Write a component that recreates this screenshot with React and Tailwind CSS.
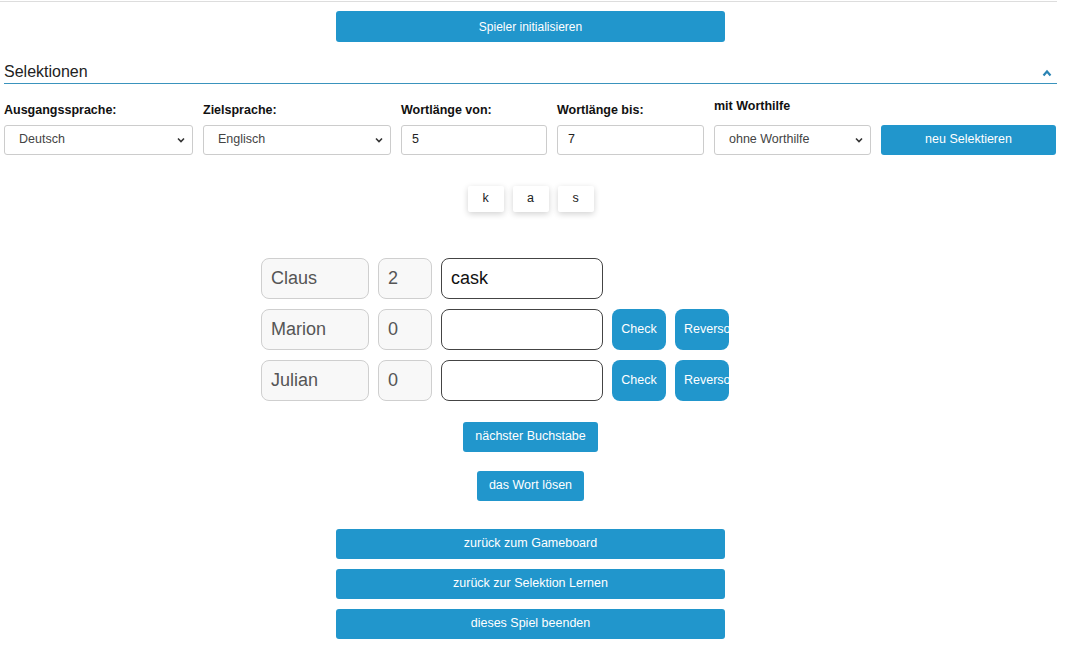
import React from "react";

const blue = "bg-[#2196cc]";

function Chevron() {
    return (
        <svg width="10" height="10" viewBox="0 0 10 10" className="absolute right-[7px] top-[10px] pointer-events-none">
            <path d="M2 3.5 L5 6.5 L8 3.5" fill="none" stroke="#333" strokeWidth="1.6" />
        </svg>
    );
}

function SelectBox({ value, width }) {
    return (
        <div className={`relative ${width}`}>
            <div className="h-[30px] border border-[#cccccc] rounded-[3px] bg-white text-[12.5px] text-[#444] pl-[14px] flex items-center">
                {value}
            </div>
            <Chevron />
        </div>
    );
}

function TextBox({ value, width }) {
    return (
        <div className={`h-[30px] ${width} border border-[#cccccc] rounded-[3px] bg-white text-[12.5px] text-[#222] pl-[10px] flex items-center`}>
            {value}
        </div>
    );
}

export default function App() {
    const players = [
        { name: "Claus", score: 2, word: "cask", buttons: false },
        { name: "Marion", score: 0, word: "", buttons: true },
        { name: "Julian", score: 0, word: "", buttons: true },
    ];

    return (
        <div className="w-[1061px] bg-white text-[#222]" style={{ fontFamily: "'Liberation Sans', Arial, sans-serif" }}>
            {/* top rule */}
            <div className="mt-[1px] w-[1057px] h-[1px] bg-[#dddddd]" />

            <div className="flex justify-center mt-[9px]">
                <button className={`${blue} text-white text-[12px] w-[389px] h-[31px] rounded-[3px]`}>
                    Spieler initialisieren
                </button>
            </div>

            {/* Selektionen */}
            <div className="ml-[4px] w-[1053px] mt-[19px] flex items-end justify-between h-[22px] pb-[3px]">
                <span className="text-[16px] text-[#222] leading-none">Selektionen</span>
                <svg width="10" height="8" viewBox="0 0 10 8" className="mr-[5px] mb-[3px]">
                    <path d="M1.5 6.5 L5 2.5 L8.5 6.5" fill="none" stroke="#2b84b4" strokeWidth="2.2" />
                </svg>
            </div>
            <div className="ml-[4px] w-[1053px] h-[1px] bg-[#3a93bd]" />

            <div className="ml-[4px] mt-[16px] flex gap-[10px] items-end">
                <div className="flex flex-col gap-[8px]">
                    <span className="text-[12.5px] font-bold text-[#111] leading-none">Ausgangssprache:</span>
                    <SelectBox value="Deutsch" width="w-[189px]" />
                </div>
                <div className="flex flex-col gap-[8px]">
                    <span className="text-[12.5px] font-bold text-[#111] leading-none">Zielsprache:</span>
                    <SelectBox value="Englisch" width="w-[188px]" />
                </div>
                <div className="flex flex-col gap-[8px]">
                    <span className="text-[12.5px] font-bold text-[#111] leading-none">Wortlänge von:</span>
                    <TextBox value="5" width="w-[146px]" />
                </div>
                <div className="flex flex-col gap-[8px]">
                    <span className="text-[12.5px] font-bold text-[#111] leading-none">Wortlänge bis:</span>
                    <TextBox value="7" width="w-[147px]" />
                </div>
                <div className="flex flex-col gap-[12px]">
                    <span className="text-[12.5px] font-bold text-[#111] leading-none">mit Worthilfe</span>
                    <SelectBox value="ohne Worthilfe" width="w-[157px]" />
                </div>
                <button className={`${blue} text-white text-[12.5px] w-[175px] h-[30px] rounded-[3px]`}>
                    neu Selektieren
                </button>
            </div>

            {/* letters */}
            <div className="flex justify-center gap-[9px] mt-[31px]">
                {["k", "a", "s"].map((l) => (
                    <div key={l} className="w-[36px] h-[26px] bg-white rounded-[2px] shadow-[0_2px_6px_rgba(0,0,0,0.18)] flex items-center justify-center text-[12.5px] text-[#222]">
                        {l}
                    </div>
                ))}
            </div>

            {/* players */}
            <div className="ml-[261px] mt-[46px] flex flex-col gap-[10px]">
                {players.map((p) => (
                    <div key={p.name} className="flex gap-[9px] h-[41px]">
                        <div className="w-[108px] h-[41px] bg-[#f8f8f8] border border-[#cfcfcf] rounded-[8px] flex items-center pl-[9px] text-[18px] text-[#555]">
                            {p.name}
                        </div>
                        <div className="w-[54px] h-[41px] bg-[#f8f8f8] border border-[#cfcfcf] rounded-[8px] flex items-center pl-[9px] text-[18px] text-[#555]">
                            {p.score}
                        </div>
                        <div className="w-[162px] h-[41px] bg-white border border-[#444] rounded-[8px] flex items-center pl-[9px] text-[18px] text-[#111]">
                            {p.word}
                        </div>
                        {p.buttons && (
                            <>
                                <button className={`${blue} text-white text-[12.5px] w-[54px] h-[41px] rounded-[8px]`}>
                                    Check
                                </button>
                                <button className={`${blue} text-white text-[12.5px] w-[54px] h-[41px] rounded-[8px] overflow-hidden whitespace-nowrap pl-[9px] text-left`}>
                                    Reverso
                                </button>
                            </>
                        )}
                    </div>
                ))}
            </div>

            <div className="flex flex-col items-center mt-[21px] gap-[19px]">
                <button className={`${blue} text-white text-[12.5px] h-[30px] px-[12px] w-[135px] rounded-[3px]`}>
                    nächster Buchstabe
                </button>
                <button className={`${blue} text-white text-[12.5px] h-[30px] w-[107px] rounded-[3px]`}>
                    das Wort lösen
                </button>
            </div>

            <div className="flex flex-col items-center mt-[28px] gap-[10px] pb-[8px]">
                {["zurück zum Gameboard", "zurück zur Selektion Lernen", "dieses Spiel beenden"].map((t) => (
                    <button key={t} className={`${blue} text-white text-[12.5px] w-[389px] h-[30px] rounded-[3px]`}>
                        {t}
                    </button>
                ))}
            </div>
        </div>
    );
}
